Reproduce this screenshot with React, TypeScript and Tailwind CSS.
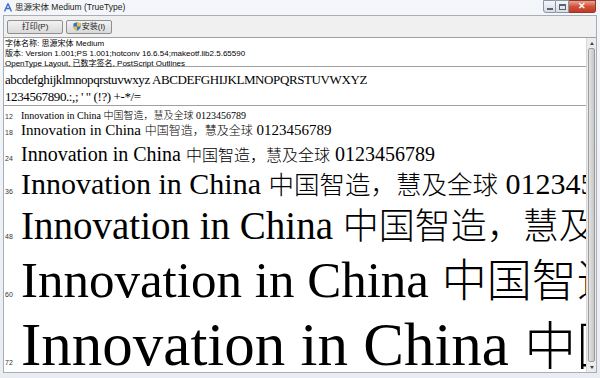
import React from "react";

const serif = "font-['Liberation_Serif','Noto_Sans_CJK_SC',serif]";
const sans = "font-['Liberation_Sans','Noto_Sans_CJK_SC',sans-serif]";
const cjk = "font-['Noto_Sans_CJK_SC',sans-serif] font-light";

const rows = [
  { label: "12", h: "h-[13px]", size: "text-[10px]", cn: "text-[10px]" },
  { label: "18", h: "h-[21px]", size: "text-[15px]", cn: "text-[12px]" },
  { label: "24", h: "h-[25px]", size: "text-[20px]", cn: "text-[16px]" },
  { label: "36", h: "h-[36px]", size: "text-[30px]", cn: "text-[25.5px]" },
  { label: "48", h: "h-[50px]", size: "text-[39px]", cn: "text-[36px]" },
  { label: "60", h: "h-[59px]", size: "text-[51px]", cn: "text-[45px]" },
  { label: "72", h: "h-[62px]", size: "text-[61px]", cn: "text-[52px]" },
];

const FontIcon = () => (
  <svg width="8" height="9" viewBox="0 0 8 9">
    <path d="M4 0.5 L7.5 8.5 M4 0.5 L0.5 8.5 M2 5.5 H6" stroke="#3b6cc9" strokeWidth="1.4" fill="none" />
  </svg>
);

const Shield = () => (
  <svg width="8" height="9" viewBox="0 0 8 9">
    <path d="M4 0.3 L7.6 1.5 V4.5 C7.6 6.6 5.8 8 4 8.7 C2.2 8 0.4 6.6 0.4 4.5 V1.5 Z" fill="#2f6fd6" />
    <path d="M4 0.3 V4.5 H7.6 V1.5 Z" fill="#f2c230" />
    <path d="M0.4 4.5 H4 V8.7 C2.2 8 0.4 6.6 0.4 4.5 Z" fill="#f2c230" />
  </svg>
);

export default function App() {
  return (
    <div className={`w-[600px] h-[378px] overflow-hidden flex flex-col bg-gradient-to-b from-[#f4f6f9] to-[#e9edf2] ${sans}`}>
      {/* title bar */}
      <div className="h-[15px] flex items-center pl-[4px] relative">
        <FontIcon />
        <span className="ml-[3px] text-[8.5px] text-[#1a1a1a] leading-none">思源宋体 Medium (TrueType)</span>
        <div className="absolute right-[4px] top-0 flex">
          <div className="w-[13px] h-[13px] border border-[#8a96a6] rounded-bl-[3px] bg-gradient-to-b from-[#f4f6f8] to-[#d6dde6] flex items-center justify-center">
            <div className="w-[6px] h-[2px] border border-[#5a6470] mt-[4px]" />
          </div>
          <div className="w-[13px] h-[13px] border-y border-r border-[#8a96a6] bg-gradient-to-b from-[#f4f6f8] to-[#d6dde6] flex items-center justify-center">
            <div className="w-[7px] h-[6px] border border-[#5a6470] border-t-2" />
          </div>
          <div className="w-[27px] h-[13px] border-y border-r border-[#8c3a2e] rounded-br-[3px] bg-gradient-to-b from-[#e8a493] via-[#d2503a] to-[#c23a22] flex items-center justify-center text-white text-[9px] font-bold leading-none">
            ✕
          </div>
        </div>
      </div>

      <div className="flex-1 min-h-0 flex flex-col mx-[3px] mb-[5px] border border-[#a7aeb8]">
        {/* toolbar */}
        <div className="h-[22px] bg-[#f0f0f0] border-b border-[#a0a0a0] flex items-center pl-[3px] gap-[3px]">
          <div className="w-[56px] h-[14px] border border-[#8e8f8f] rounded-[2px] bg-gradient-to-b from-[#f2f2f2] to-[#d9d9d9] flex items-center justify-center text-[8px] text-[#222] leading-none">
            打印(P)
          </div>
          <div className="w-[46px] h-[14px] border border-[#8e8f8f] rounded-[2px] bg-gradient-to-b from-[#f2f2f2] to-[#d9d9d9] flex items-center justify-center gap-[1px] text-[8px] text-[#222] leading-none">
            <Shield />
            安装(I)
          </div>
        </div>

        <div className="flex-1 min-h-0 flex">
          {/* content */}
          <div className="flex-1 min-w-0 bg-white overflow-hidden flex flex-col">
            <div className="h-[29px] border-b border-[#a0a0a0] pl-[1px] pt-[1px] text-[8px] leading-[10px] text-black">
              <div>字体名称: 思源宋体 Medium</div>
              <div>版本: Version 1.001;PS 1.001;hotconv 16.6.54;makeotf.lib2.5.65590</div>
              <div>OpenType Layout, 已数字签名, PostScript Outlines</div>
            </div>
            <div className={`h-[40px] border-b border-[#a0a0a0] pl-[1px] pt-[4px] text-[13px] leading-[17px] tracking-[-0.4px] text-black ${serif}`}>
              <div className="whitespace-nowrap">abcdefghijklmnopqrstuvwxyz ABCDEFGHIJKLMNOPQRSTUVWXYZ</div>
              <div className="whitespace-nowrap">1234567890.:,; ' " (!?) +-*/=</div>
            </div>
            <div className="pt-[4px]">
              {rows.map((r) => (
                <div key={r.label} className={`flex items-baseline ${r.h}`}>
                  <span className="w-[17px] shrink-0 pl-[1px] text-[7px] text-[#333] leading-none">{r.label}</span>
                  <span className={`whitespace-nowrap leading-none text-black ${r.size} ${serif}`}>
                    Innovation in China <span className={`${cjk} ${r.cn}`}>中国智造，慧及全球</span> 0123456789
                  </span>
                </div>
              ))}
            </div>
          </div>

          {/* scrollbar */}
          <div className="w-[10px] bg-[#ececec] border-l border-[#d8d8d8] flex flex-col">
            <div className="h-[10px] flex items-center justify-center">
              <div className="w-0 h-0 border-x-[2px] border-x-transparent border-b-[3px] border-b-[#444]" />
            </div>
            <div className="flex-1 mx-[1px] rounded-[2px] border border-[#9a9a9a] bg-gradient-to-r from-[#e6e6e6] via-[#d4d4d4] to-[#c8c8c8]" />
            <div className="h-[10px] flex items-center justify-center">
              <div className="w-0 h-0 border-x-[2px] border-x-transparent border-t-[3px] border-t-[#444]" />
            </div>
          </div>
        </div>
      </div>
    </div>
  );
}
